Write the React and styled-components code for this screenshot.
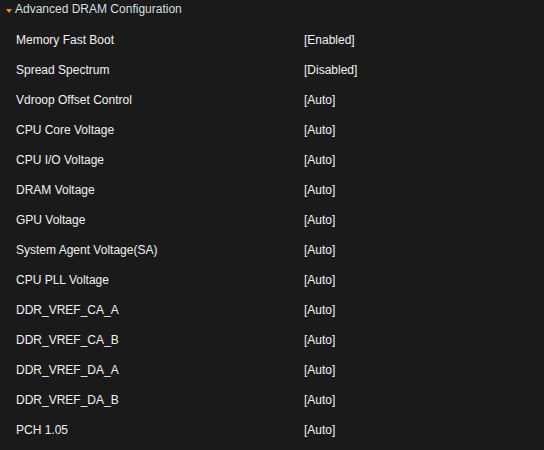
import React from "react";
import styled, { createGlobalStyle } from "styled-components";

const Global = createGlobalStyle`
  html, body { margin: 0; padding: 0; background: #1a1a1a; }
  body { font-family: "Liberation Sans", Arial, sans-serif; }
`;

const Page = styled.div`
  width: 544px;
  height: 450px;
  background: #1a1a1a;
  overflow: hidden;
`;

const Header = styled.div`
  display: flex;
  align-items: center;
  height: 18px;
  padding-left: 6px;
  gap: 3px;
  color: #dde2e6;
  font-size: 12px;
  text-shadow: 0 0 1px rgba(0,0,0,0.8);
`;

const Caret = styled.span`
  width: 0;
  height: 0;
  border-left: 3.5px solid transparent;
  border-right: 3.5px solid transparent;
  border-top: 4px solid #f0901a;
  margin-top: 3px;
`;

const List = styled.div`
  padding-top: 7px;
`;

const Row = styled.div`
  display: grid;
  grid-template-columns: 288px auto;
  align-items: center;
  height: 30px;
  padding-left: 16px;
  color: #f2f2f2;
  font-size: 12px;
`;

const items = [
  ["Memory Fast Boot", "[Enabled]"],
  ["Spread Spectrum", "[Disabled]"],
  ["Vdroop Offset Control", "[Auto]"],
  ["CPU Core Voltage", "[Auto]"],
  ["CPU I/O Voltage", "[Auto]"],
  ["DRAM Voltage", "[Auto]"],
  ["GPU Voltage", "[Auto]"],
  ["System Agent Voltage(SA)", "[Auto]"],
  ["CPU PLL Voltage", "[Auto]"],
  ["DDR_VREF_CA_A", "[Auto]"],
  ["DDR_VREF_CA_B", "[Auto]"],
  ["DDR_VREF_DA_A", "[Auto]"],
  ["DDR_VREF_DA_B", "[Auto]"],
  ["PCH 1.05", "[Auto]"],
];

export default function App() {
  return (
    <Page>
      <Global />
      <Header>
        <Caret />
        <span>Advanced DRAM Configuration</span>
      </Header>
      <List>
        {items.map(([l, v]) => (
          <Row key={l}>
            <span>{l}</span>
            <span>{v}</span>
          </Row>
        ))}
      </List>
    </Page>
  );
}
